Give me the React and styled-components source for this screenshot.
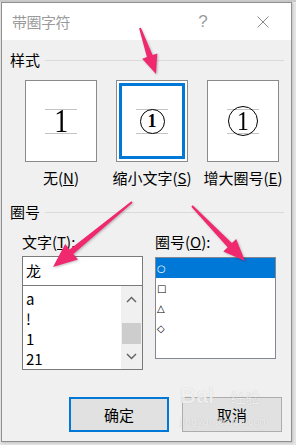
import React from 'react';
import styled, { createGlobalStyle } from 'styled-components';

const GlobalStyle = createGlobalStyle`
  html, body {
    margin: 0;
    padding: 0;
    background: #d6d6d6;
  }
  body {
    font-family: "Noto Sans CJK SC", "Liberation Sans", sans-serif;
    color: #000;
  }
`;

const Screen = styled.div`
  position: relative;
  width: 296px;
  height: 445px;
  overflow: hidden;
  box-sizing: border-box;
  padding: 2px 4px 0 1px;
  background: linear-gradient(#c9c9c9, #c9c9c9) top / 100% 2px no-repeat, #e4e4e4;
`;

const Dialog = styled.div`
  width: 291px;
  height: 440px;
  box-sizing: border-box;
  border: 1px solid #8f8f8f;
  background: #f0f0f0;
  display: flex;
  flex-direction: column;
  box-shadow: 1px 1px 2px rgba(0, 0, 0, 0.15);
`;

const TitleBar = styled.div`
  height: 37px;
  background: #fff;
  display: flex;
  align-items: center;
  padding: 0 5px 0 10px;
  color: #9b9b9b;
`;

const Title = styled.div`
  flex: 1;
  font-size: 15px;
  letter-spacing: -0.5px;
`;

const Help = styled.div`
  width: 20px;
  text-align: center;
  font-family: "Liberation Sans", sans-serif;
  font-size: 17px;
  margin-right: 27px;
`;

const Close = styled.div`
  width: 46px;
  height: 30px;
  display: flex;
  align-items: center;
  justify-content: center;
`;

const Body = styled.div`
  flex: 1;
  display: flex;
  flex-direction: column;
  padding: 10px 0 0 8px;
`;

const GroupHeader = styled.div`
  display: flex;
  align-items: center;
  gap: 5px;
  height: 20px;
  font-size: 15px;
  line-height: 20px;
  margin-top: ${p => p.$top || 0}px;
  padding-right: 7px;
  &::after {
    content: "";
    flex: 1;
    height: 1px;
    background: #dadada;
  }
`;

const Options = styled.div`
  display: flex;
  gap: 19px;
  margin: 10px 0 0 15px;
`;

const Option = styled.div`
  width: 72px;
  display: flex;
  flex-direction: column;
  align-items: center;
`;

const Preview = styled.div`
  width: 72px;
  height: 82px;
  box-sizing: border-box;
  border: 1px solid #8a8a8a;
  background: #fff;
  display: flex;
  align-items: center;
  justify-content: center;
  box-shadow: ${p => (p.$active ? 'inset 0 0 0 2px #fff, inset 0 0 0 5px #0078d7' : 'none')};
`;

const Guide = styled.div`
  width: 32px;
  height: 23px;
  border-top: 1px solid #c4c4c4;
  border-bottom: 1px solid #c4c4c4;
  display: flex;
  align-items: center;
  justify-content: center;
`;

const Digit = styled.span`
  font-family: "Liberation Serif", serif;
  font-size: ${p => p.$size}px;
  font-weight: ${p => (p.$bold ? 700 : 400)};
  line-height: 1;
  transform: ${p => (p.$narrow ? 'scaleX(0.85)' : 'none')};
`;

const Ring = styled.div`
  flex: none;
  width: ${p => p.$d}px;
  height: ${p => p.$d}px;
  box-sizing: border-box;
  border: 1px solid #000;
  border-radius: 50%;
  display: flex;
  align-items: center;
  justify-content: center;
`;

const OptionLabel = styled.div`
  width: 72px;
  display: flex;
  justify-content: center;
  white-space: nowrap;
  font-size: 15px;
  line-height: 20px;
  margin-top: 6px;
`;

const Columns = styled.div`
  display: flex;
  gap: 12px;
  margin: 10px 0 0 12px;
`;

const Column = styled.div`
  width: 121px;
  display: flex;
  flex-direction: column;
`;

const FieldLabel = styled.div`
  font-size: 15px;
  line-height: 20px;
  height: 20px;
  margin-bottom: ${p => p.$gap}px;
`;

const Combo = styled.div`
  border: 1px solid #7a7a7a;
  background: #fff;
`;

const TextBox = styled.div`
  height: 28px;
  padding-left: 3px;
  font-size: 15px;
  line-height: 28px;
  border-bottom: 1px solid #7a7a7a;
`;

const ListArea = styled.div`
  height: 83px;
  display: flex;
  overflow: hidden;
`;

const Items = styled.div`
  flex: 1;
  padding-top: 3px;
`;

const Item = styled.div`
  height: 20px;
  line-height: 20px;
  padding-left: 3px;
  font-size: 15px;
`;

const ScrollBar = styled.div`
  width: 21px;
  background: #f0f0f0;
  display: flex;
  flex-direction: column;
  align-items: center;
`;

const ScrollButton = styled.div`
  height: 20px;
  width: 21px;
  display: flex;
  align-items: center;
  justify-content: center;
  margin-top: ${p => p.$top || 0}px;
`;

const Thumb = styled.div`
  width: 19px;
  height: 21px;
  background: #cdcdcd;
  margin-top: ${p => p.$top}px;
`;

const ListBox = styled.div`
  height: 102px;
  box-sizing: border-box;
  border: 1px solid #828790;
  background: #fff;
  margin-top: 1px;
`;

const Symbol = styled.div`
  height: 20px;
  display: flex;
  align-items: center;
  padding-left: 1px;
  font-family: "DejaVu Sans", sans-serif;
  font-size: 10px;
  color: ${p => (p.$selected ? '#fff' : '#000')};
  background: ${p => (p.$selected ? '#0078d7' : 'transparent')};
`;

const Buttons = styled.div`
  display: flex;
  justify-content: flex-end;
  gap: 13px;
  margin-top: 27px;
  padding-right: 9px;
`;

const Button = styled.div`
  width: 100px;
  height: 35px;
  box-sizing: border-box;
  display: flex;
  align-items: center;
  justify-content: center;
  background: #e1e1e1;
  font-size: 15px;
  border: ${p => (p.$primary ? '2px solid #0078d7' : '1px solid #adadad')};
`;

const Overlay = styled.svg`
  position: absolute;
  left: 0;
  top: 0;
  pointer-events: none;
  filter: drop-shadow(1px 1px 1px rgba(0, 0, 0, 0.25));
`;

const Watermark = styled.div`
  position: absolute;
  left: 180px;
  top: 384px;
  width: 90px;
  color: rgba(255, 255, 255, 0.75);
  text-shadow: 0 0 1px rgba(0, 0, 0, 0.2);
  pointer-events: none;
`;

const MarkTop = styled.div`
  display: flex;
  align-items: flex-end;
  gap: 4px;
  font-family: "Liberation Sans", sans-serif;
  font-weight: 700;
  font-size: 22px;
  line-height: 24px;
`;

const MarkCn = styled.span`
  font-family: "Noto Sans CJK SC", sans-serif;
  font-size: 15px;
  font-weight: 400;
  line-height: 22px;
  margin-left: 12px;
`;

const MarkUrl = styled.div`
  font-family: "Liberation Sans", sans-serif;
  font-size: 11px;
  line-height: 14px;
  margin-top: 6px;
`;

function Arrow({ from, to, head = 20, half = 9, w0 = 2, w1 = 6 }) {
  const [sx, sy] = from;
  const [tx, ty] = to;
  const len = Math.hypot(tx - sx, ty - sy);
  const ux = (tx - sx) / len;
  const uy = (ty - sy) / len;
  const nx = -uy;
  const ny = ux;
  const bx = tx - ux * head;
  const by = ty - uy * head;
  const pts = [
    [sx + (nx * w0) / 2, sy + (ny * w0) / 2],
    [bx + (nx * w1) / 2, by + (ny * w1) / 2],
    [bx + nx * half, by + ny * half],
    [tx, ty],
    [bx - nx * half, by - ny * half],
    [bx - (nx * w1) / 2, by - (ny * w1) / 2],
    [sx - (nx * w0) / 2, sy - (ny * w0) / 2],
  ];
  return <polygon points={pts.map(p => p.map(v => v.toFixed(1)).join(',')).join(' ')} />;
}

const Chevron = ({ up }) => (
  <svg width="11" height="7" viewBox="0 0 11 7">
    <polyline
      points={up ? '1,6 5.5,1.5 10,6' : '1,1 5.5,5.5 10,1'}
      fill="none"
      stroke="#606060"
      strokeWidth="1.4"
    />
  </svg>
);

export default function App() {
  return (
    <Screen>
      <GlobalStyle />
      <Dialog>
        <TitleBar>
          <Title>带圈字符</Title>
          <Help>?</Help>
          <Close>
            <svg width="12" height="12" viewBox="0 0 12 12">
              <path d="M0.5 0.5 L11.5 11.5 M11.5 0.5 L0.5 11.5" stroke="#8a8a8a" strokeWidth="1" />
            </svg>
          </Close>
        </TitleBar>
        <Body>
          <GroupHeader>样式</GroupHeader>
          <Options>
            <Option>
              <Preview>
                <Guide>
                  <Digit $size={33} $narrow>1</Digit>
                </Guide>
              </Preview>
              <OptionLabel>无(<u>N</u>)</OptionLabel>
            </Option>
            <Option>
              <Preview $active>
                <Guide>
                  <Ring $d={25}>
                    <Digit $size={18} $bold>1</Digit>
                  </Ring>
                </Guide>
              </Preview>
              <OptionLabel>缩小文字(<u>S</u>)</OptionLabel>
            </Option>
            <Option>
              <Preview>
                <Guide>
                  <Ring $d={30}>
                    <Digit $size={28} $narrow>1</Digit>
                  </Ring>
                </Guide>
              </Preview>
              <OptionLabel>增大圈号(<u>E</u>)</OptionLabel>
            </Option>
          </Options>
          <GroupHeader $top={14}>圈号</GroupHeader>
          <Columns>
            <Column>
              <FieldLabel $gap={4}>文字(<u>T</u>):</FieldLabel>
              <Combo>
                <TextBox>龙</TextBox>
                <ListArea>
                  <Items>
                    <Item>a</Item>
                    <Item>!</Item>
                    <Item>1</Item>
                    <Item>21</Item>
                  </Items>
                  <ScrollBar>
                    <ScrollButton $top={3}>
                      <Chevron up />
                    </ScrollButton>
                    <Thumb $top={14} />
                    <ScrollButton $top={2}>
                      <Chevron />
                    </ScrollButton>
                  </ScrollBar>
                </ListArea>
              </Combo>
            </Column>
            <Column>
              <FieldLabel $gap={4}>圈号(<u>O</u>):</FieldLabel>
              <ListBox>
                <Symbol $selected>○</Symbol>
                <Symbol>□</Symbol>
                <Symbol>△</Symbol>
                <Symbol>◇</Symbol>
              </ListBox>
            </Column>
          </Columns>
          <Buttons>
            <Button $primary>确定</Button>
            <Button>取消</Button>
          </Buttons>
        </Body>
      </Dialog>
      <Watermark>
        <MarkTop>
          Bai<MarkCn>经验</MarkCn>
        </MarkTop>
        <MarkUrl>jingyan.baidu.com</MarkUrl>
      </Watermark>
      <Overlay width="296" height="445" viewBox="0 0 296 445" fill="#f0286e">
        <Arrow from={[140, 28]} to={[156, 74]} head={19} half={8} />
        <Arrow from={[132, 202]} to={[53, 267]} head={24} half={10} />
        <Arrow from={[192, 206]} to={[245, 261]} head={22} half={9} />
      </Overlay>
    </Screen>
  );
}
